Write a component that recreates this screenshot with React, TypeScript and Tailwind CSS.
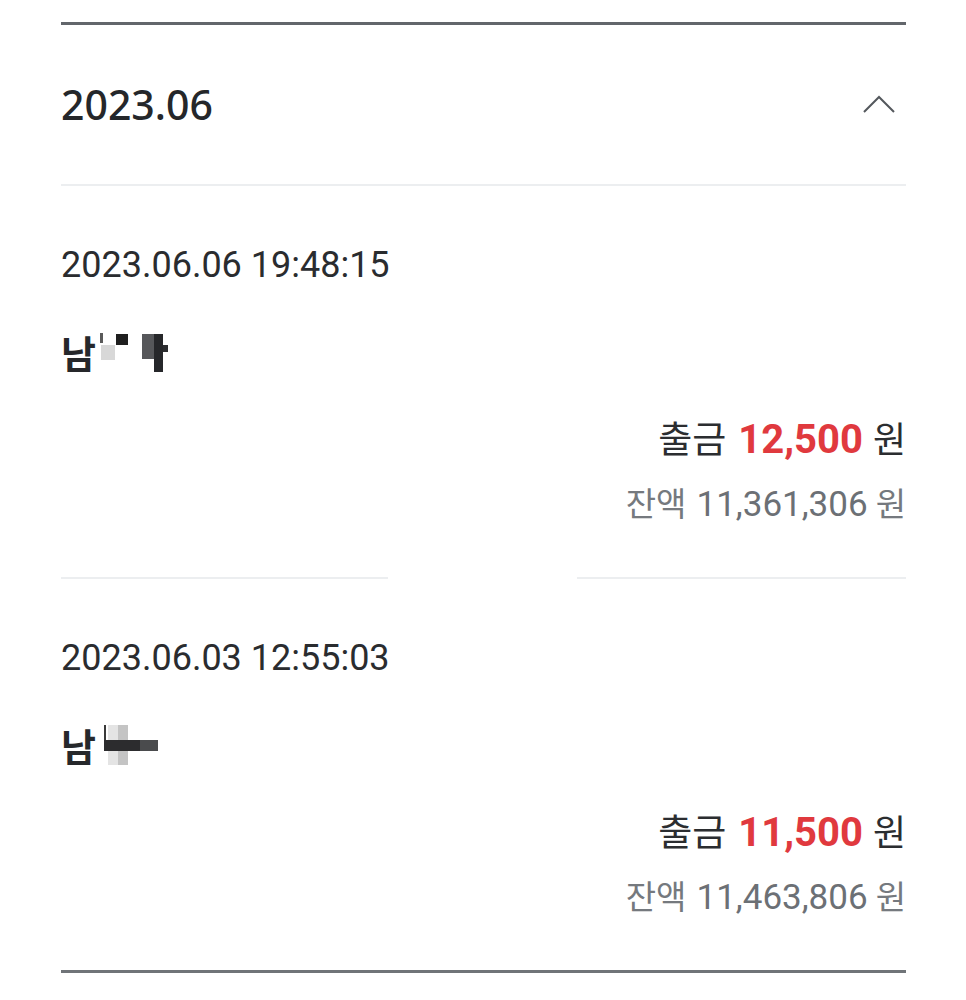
import React from 'react';

type Tx = {
  at: string;
  name: 'a' | 'b';
  amount: string;
  balance: string;
};

const txs: Tx[] = [
  { at: '2023.06.06 19:48:15', name: 'a', amount: '12,500', balance: '11,361,306' },
  { at: '2023.06.03 12:55:03', name: 'b', amount: '11,500', balance: '11,463,806' },
];

const ROBOTO = "font-['Roboto',_'Noto_Sans_CJK_KR',_sans-serif]";
const KR = "font-['Noto_Sans_CJK_KR',_sans-serif]";

// mosaic used to hide the rest of the name
function Mosaic({ kind }: { kind: 'a' | 'b' }) {
  if (kind === 'a') {
    return (
      <svg width="74" height="44" viewBox="0 0 74 44" className="block">
        <rect x="4" y="3" width="3" height="10" fill="#5a5a5a" />
        <rect x="5" y="15" width="14" height="15" fill="#d8d8d8" />
        <rect x="20" y="4" width="12" height="11" fill="#1f1f1f" />
        <rect x="46" y="4" width="12" height="25" fill="#56575a" />
        <rect x="58" y="4" width="9" height="38" fill="#26272a" />
        <rect x="67" y="15" width="5" height="7" fill="#2c2d30" />
      </svg>
    );
  }
  return (
    <svg width="74" height="44" viewBox="0 0 74 44" className="block">
      <rect x="12" y="2" width="10" height="40" fill="#e4e4e4" />
      <rect x="22" y="2" width="10" height="40" fill="#c4c4c4" />
      <rect x="8" y="2" width="2" height="15" fill="#3a3a3a" />
      <rect x="8" y="17" width="36" height="11" fill="#2c2c2e" />
      <rect x="44" y="17" width="18" height="11" fill="#4a4b4d" />
    </svg>
  );
}

function Item({ tx, last }: { tx: Tx; last?: boolean }) {
  return (
    <div className="pt-[57px]">
      <div className={`${ROBOTO} text-[36px] leading-[44px] text-[#2a2c2f]`}>{tx.at}</div>
      <div className="mt-[43px] flex items-center h-[44px]">
        <span className={`${KR} text-[38px] leading-[44px] font-bold text-[#26282b]`}>남</span>
        <Mosaic kind={tx.name} />
      </div>
      <div className="mt-[39px] flex justify-end items-baseline h-[48px] leading-[48px]">
        <span className={`${KR} text-[37px] text-[#2b2d30]`}>출금</span>
        <span className={`${ROBOTO} text-[40px] font-bold text-[#e0393e] ml-[12px]`}>{tx.amount}</span>
        <span className={`${KR} text-[36px] text-[#2b2d30] ml-[10px]`}>원</span>
      </div>
      <div className="mt-[19px] flex justify-end items-baseline h-[44px] leading-[44px]">
        <span className={`${KR} text-[33px] text-[#75797e]`}>잔액</span>
        <span className={`${ROBOTO} text-[35px] text-[#6c7075] ml-[10px]`}>{tx.balance}</span>
        <span className={`${KR} text-[33px] text-[#75797e] ml-[8px]`}>원</span>
      </div>
      {last ? (
        <div className="mt-[53px] h-[3px] bg-[#707478]" />
      ) : (
        <div className="mt-[53px] flex justify-between">
          <div className="w-[327px] h-[2px] bg-[#eceef0]" />
          <div className="w-[329px] h-[2px] bg-[#eceef0]" />
        </div>
      )}
    </div>
  );
}

export default function App() {
  return (
    <div className="w-[966px] h-[1000px] bg-white px-[61px] pt-[22px] overflow-hidden">
      <div className="w-[845px]">
        <div className="h-[3px] bg-[#62666b]" />
        <div className="h-[159px] flex items-center justify-between">
          <div className="font-['Noto_Sans',_sans-serif] text-[41px] font-medium text-[#25272a] leading-none">2023.06</div>
          <svg width="34" height="20" viewBox="0 0 34 20" className="mr-[10px] -mt-[2px]">
            <path d="M2 18 L17 3 L32 18" fill="none" stroke="#54585d" strokeWidth="2" />
          </svg>
        </div>
        <div className="h-[2px] bg-[#eceef0]" />
        {txs.map((tx, i) => (
          <Item key={tx.at} tx={tx} last={i === txs.length - 1} />
        ))}
      </div>
    </div>
  );
}
